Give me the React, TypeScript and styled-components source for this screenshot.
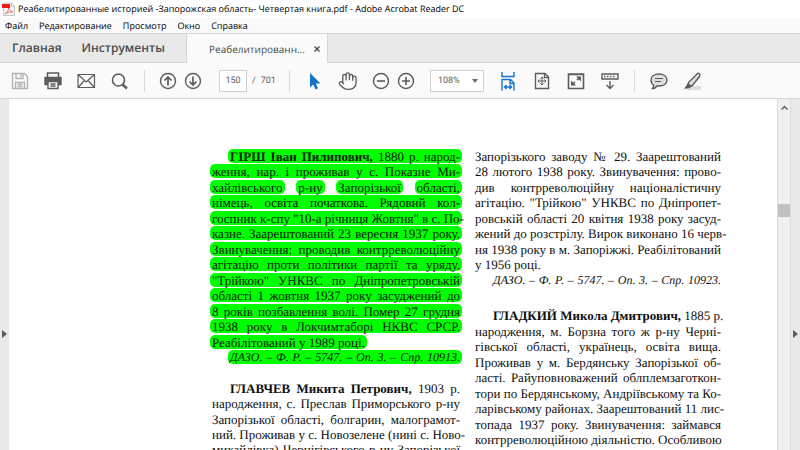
import React from 'react';
import styled, { createGlobalStyle } from 'styled-components';

const Global = createGlobalStyle`
  * { box-sizing: border-box; }
  body { margin: 0; background: #fff; font-family: "Open Sans", sans-serif; color: #000; text-rendering: geometricPrecision; }
  button, input, select { font: inherit; color: inherit; text-rendering: inherit; }
`;

const Window = styled.div`
  display: flex;
  flex-direction: column;
  height: 100vh;
  overflow: hidden;
`;

const TitleBar = styled.header`
  display: flex;
  align-items: center;
  gap: 3px;
  height: 18px;
  flex: none;
  padding-left: 1px;
  font: 9px/18px "Open Sans", sans-serif;
  white-space: nowrap;
`;

const MenuBar = styled.nav`
  display: flex;
  gap: 11px;
  height: 15px;
  flex: none;
  padding-left: 5px;
  background: #fafafa;
`;

const MenuItem = styled.button`
  border: 0;
  padding: 0;
  background: none;
  font: 9px/15px "Open Sans", sans-serif;
`;

const TabBar = styled.div`
  display: flex;
  flex: none;
  height: 30px;
  background: #e9e9e9;
  border-top: 1px solid #d6d6d6;
  border-bottom: 1px solid #d6d6d6;
`;

const MainTabs = styled.div`
  display: flex;
  gap: 20px;
  width: 187px;
  padding-left: 12px;
  border-right: 1px solid #d6d6d6;
`;

const MainTab = styled.button`
  border: 0;
  padding: 0;
  background: none;
  color: #4b4b4b;
  font: 600 12px/28px "Open Sans", sans-serif;
`;

const FileTab = styled.div`
  display: flex;
  align-items: center;
  justify-content: space-between;
  width: 141px;
  margin-bottom: -1px;
  padding: 0 7px 0 22px;
  background: #fafafa;
  border-right: 1px solid #d6d6d6;
`;

const FileName = styled.button`
  border: 0;
  padding: 0;
  background: none;
  color: #4b4b4b;
  font: 10px/28px "Open Sans", sans-serif;
`;

const CloseButton = styled.button`
  display: flex;
  border: 0;
  padding: 0;
  background: none;
`;

const Toolbar = styled.div`
  display: flex;
  align-items: center;
  flex: none;
  height: 36px;
  padding-left: 8px;
  background: #fafafa;
  border-bottom: 1px solid #d6d6d6;
  color: #5c5c5c;
`;

const Group = styled.div<{ $gap: number; $before?: number }>`
  display: flex;
  align-items: center;
  gap: ${p => p.$gap}px;
  margin-left: ${p => p.$before ?? 0}px;
`;

const Separator = styled.span<{ $before: number; $after: number }>`
  width: 1px;
  height: 22px;
  margin: 0 ${p => p.$after}px 0 ${p => p.$before}px;
  background: #d9d9d9;
`;

const ToolButton = styled.button<{ $tone?: string }>`
  display: flex;
  border: 0;
  padding: 0;
  background: none;
  color: ${p => p.$tone ?? '#5c5c5c'};
`;

const PageField = styled.div`
  display: flex;
  align-items: center;
  gap: 5px;
  margin-left: 14px;
  font: 9px/14px Roboto, sans-serif;
`;

const PageInput = styled.input`
  width: 28px;
  height: 22px;
  padding: 0;
  border: 1px solid #d0d0d0;
  background: #fff;
  text-align: center;
`;

const ZoomBox = styled.div`
  display: flex;
  align-items: center;
  position: relative;
  margin: 0 12px;
  font: 9px/14px Roboto, sans-serif;
`;

const ZoomSelect = styled.select`
  appearance: none;
  width: 54px;
  height: 22px;
  padding: 0 0 0 7px;
  border: 1px solid #d0d0d0;
  border-radius: 0;
  background: #fff;
`;

const Caret = styled.span`
  position: absolute;
  right: 6px;
  border: 3px solid transparent;
  border-top: 4px solid #6a6a6a;
  border-bottom: 0;
  pointer-events: none;
`;

const Body = styled.div`
  display: flex;
  flex: 1;
  min-height: 0;
`;

const SideHandle = styled.button`
  display: flex;
  align-items: center;
  justify-content: center;
  flex: none;
  width: 9px;
  padding: 118px 0 0;
  border: 0;
  background: #e9e9e9;
`;

const Sheet = styled.main`
  display: flex;
  align-items: flex-start;
  flex: 1;
  min-width: 0;
  gap: 15px;
  padding: 50px 0 0 203px;
  overflow: hidden;
  background: #fff;
`;

const Column = styled.article<{ $width: number }>`
  flex: none;
  width: ${p => p.$width}px;
  color: #101010;
  font: 13px/1.19 "Liberation Serif", serif;
  white-space: nowrap;
`;

const Entry = styled.section<{ $after: number }>`
  margin-bottom: ${p => p.$after}px;
`;

const Line = styled.div<{ $indent?: boolean; $natural?: boolean }>`
  display: flex;
  justify-content: space-between;
  height: 1.19em;
  padding-left: ${p => (p.$indent ? 18 : 0)}px;
  text-align-last: ${p => (p.$natural ? 'left' : 'justify')};
`;

const Run = styled.span<{ $fill: boolean; $italic?: boolean }>`
  flex: ${p => (p.$fill ? '1' : 'none')};
  min-width: 0;
  ${p => p.$italic && 'font: italic 12px/15px "Liberation Serif", serif;'}
`;

const Highlight = styled(Run).attrs({ as: 'mark' })`
  height: 14px;
  margin: 0 -2px;
  padding: 0 2px;
  border-radius: 5px;
  background: #00ff00;
  color: #052005;
`;

const ScrollTrack = styled.div`
  display: flex;
  flex-direction: column;
  align-items: center;
  flex: none;
  width: 14px;
  padding-top: 6px;
  background: #f0f0f0;
  border-left: 1px solid #dcdcdc;
  border-right: 1px solid #dcdcdc;
`;

const ScrollThumb = styled.div`
  width: 12px;
  height: 13px;
  margin-top: 94px;
  background: #c1c1c1;
`;

type Row = { t?: string; b?: string; words?: string[]; natural?: boolean; indent?: boolean; italic?: boolean };

const hirsh: Row[] = [
  { b: 'ГІРШ Іван Пилипович,', t: ' 1880 р. народ-', indent: true },
  { t: 'ження, нар. і проживав у с. Показне Ми-' },
  { words: ['хайлівського', 'р-ну', 'Запорізької', 'області,'] },
  { t: 'німець, освіта початкова. Рядовий кол-' },
  { t: 'госпник к-спу "10-а річниця Жовтня" в с. По-' },
  { t: 'казне. Заарештований 23 вересня 1937 року.' },
  { t: 'Звинувачення: проводив контрреволюційну' },
  { t: 'агітацію проти політики партії та уряду.' },
  { t: '"Трійкою" УНКВС по Дніпропетровській' },
  { t: 'області 1 жовтня 1937 року засуджений до' },
  { t: '8 років позбавлення волі. Помер 27 грудня' },
  { t: '1938 року в Локчимтаборі НКВС СРСР.' },
  { t: 'Реабілітований у 1989 році.', natural: true },
  { t: 'ДАЗО. – Ф. Р. – 5747. – Оп. 3. – Спр. 10913.', indent: true, italic: true },
];

const hlavchev: Row[] = [
  { b: 'ГЛАВЧЕВ Микита Петрович,', t: ' 1903 р.', indent: true },
  { t: 'народження, с. Преслав Приморського р-ну' },
  { t: 'Запорізької області, болгарин, малограмот-' },
  { t: 'ний. Проживав у с. Новозелене (нині с. Ново-' },
  { t: 'михайлівка) Чернігівського р-ну Запорізької' },
];

const zavod: Row[] = [
  { t: 'Запорізького заводу № 29. Заарештований' },
  { t: '28 лютого 1938 року. Звинувачення: прово-' },
  { t: 'див контрреволюційну націоналістичну' },
  { t: 'агітацію. "Трійкою" УНКВС по Дніпропет-' },
  { t: 'ровській області 20 квітня 1938 року засуд-' },
  { t: 'жений до розстрілу. Вирок виконано 16 черв-' },
  { t: 'ня 1938 року в м. Запоріжжі. Реабілітований' },
  { t: 'у 1956 році.', natural: true },
  { t: 'ДАЗО. – Ф. Р. – 5747. – Оп. 3. – Спр. 10923.', indent: true, italic: true },
];

const hladkyi: Row[] = [
  { b: 'ГЛАДКИЙ Микола Дмитрович,', t: ' 1885 р.', indent: true },
  { t: 'народження, м. Борзна того ж р-ну Черні-' },
  { t: 'гівської області, українець, освіта вища.' },
  { t: 'Проживав у м. Бердянську Запорізької об-' },
  { t: 'ласті. Райуповноважений облплемзаготкон-' },
  { t: 'тори по Бердянському, Андріївському та Ко-' },
  { t: 'ларівському районах. Заарештований 11 лис-' },
  { t: 'топада 1937 року. Звинувачення: займався' },
  { t: 'контрреволюційною діяльністю. Особливою' },
  { t: '"трійкою" УНКВС по Дніпропетровській об-' },
];

function Lines({ rows, marked, after }: { rows: Row[]; marked?: boolean; after: number }) {
  const Piece = marked ? Highlight : Run;
  return (
    <Entry $after={after}>
      {rows.map((r, i) => (
        <Line key={i} $indent={r.indent} $natural={r.natural}>
          {r.words
            ? r.words.map(w => <Piece key={w} $fill={false}>{w}</Piece>)
            : <Piece $fill={!r.natural} $italic={r.italic}>{r.b && <b>{r.b}</b>}{r.t}</Piece>}
        </Line>
      ))}
    </Entry>
  );
}

function Glyph({ children }: { children: React.ReactNode }) {
  return (
    <svg width="24" height="24" viewBox="0 0 24 24" fill="none" stroke="currentColor" strokeWidth="1.4" aria-hidden="true">
      {children}
    </svg>
  );
}

function Tool({ label, tone, children }: { label: string; tone?: string; children: React.ReactNode }) {
  return <ToolButton type="button" aria-label={label} title={label} $tone={tone}><Glyph>{children}</Glyph></ToolButton>;
}

export default function App() {
  return (
    <Window>
      <Global />
      <TitleBar>
        <svg width="14" height="14" viewBox="0 0 14 14" aria-hidden="true">
          <path d="M2.5 1h8l3 3v9.5h-11z" fill="#f3f3f3" stroke="#c4c4c4" />
          <path d="M10.5 1v3h3" fill="#fff" stroke="#b9b9b9" />
          <rect x="1" y="2" width="8" height="4" fill="#f01818" />
          <path d="M4 12c2.5-2 4-4 3.5-6 1 2 2 4 4.5 4-3-.5-5.5.5-8 2z" fill="none" stroke="#e0605c" strokeWidth=".8" />
        </svg>
        <span>Реабелитированные историей -Запорожская область- Четвертая книга.pdf - Adobe Acrobat Reader DC</span>
      </TitleBar>
      <MenuBar>
        {['Файл', 'Редактирование', 'Просмотр', 'Окно', 'Справка'].map(m => <MenuItem key={m} type="button">{m}</MenuItem>)}
      </MenuBar>
      <TabBar>
        <MainTabs>
          <MainTab type="button">Главная</MainTab>
          <MainTab type="button">Инструменты</MainTab>
        </MainTabs>
        <FileTab>
          <FileName type="button">Реабелитированн...</FileName>
          <CloseButton type="button" aria-label="Закрыть">
            <svg width="6" height="6" viewBox="0 0 6 6" stroke="#4b4b4b" strokeWidth="1.4" aria-hidden="true"><path d="M.5.5l5 5M5.5.5l-5 5" /></svg>
          </CloseButton>
        </FileTab>
      </TabBar>
      <Toolbar>
        <Group $gap={9}>
          <Tool label="Сохранить" tone="#b4b4b4">
            <path d="M4.5 4.5h12l3 3v12h-15zM8 4.5v5h7v-5M13 5v3M7.5 19.5v-6h9v6M9.5 15.5h5M9.5 17.5h5" />
          </Tool>
          <Tool label="Печать">
            <path d="M6.5 8v-4h11v4" strokeWidth="1.6" />
            <path d="M4 8.5h16v7h-3v-3H7v3H4z" fill="currentColor" strokeLinejoin="round" />
            <path d="M7 12.5h10v7H7zM9.5 15h5M9.5 17h5" fill="#fafafa" />
          </Tool>
          <Tool label="Отправить по почте">
            <path d="M4 5.5h16.5v13H4zM4 5.5l8.2 7.5 8.3-7.5M4 18.5l6-6.5M20.5 18.5l-6-6.5" strokeWidth="1.2" />
          </Tool>
          <Tool label="Найти">
            <circle cx="11.5" cy="11" r="6" strokeWidth="1.6" /><path d="M15.5 15.5l4.5 4" strokeWidth="2.4" />
          </Tool>
        </Group>
        <Separator $before={13} $after={11} />
        <Group $gap={1}>
          <Tool label="Предыдущая страница"><circle cx="12" cy="12" r="7.5" /><path d="M12 16.5v-8M8.5 11.5L12 8l3.5 3.5" strokeWidth="1.7" /></Tool>
          <Tool label="Следующая страница"><circle cx="12" cy="12" r="7.5" /><path d="M12 7.5v8M8.5 12.5L12 16l3.5-3.5" strokeWidth="1.7" /></Tool>
        </Group>
        <PageField>
          <PageInput aria-label="Номер страницы" defaultValue="150" />
          <span>/</span>
          <span>701</span>
        </PageField>
        <Separator $before={13} $after={12} />
        <Group $gap={10}>
          <Tool label="Выделение" tone="#1473c8"><path d="M8 4v14.5l3.2-3 2.3 5 2.5-1.2-2.3-4.8h4.8z" fill="currentColor" stroke="none" /></Tool>
          <Tool label="Рука">
            <g transform="translate(1.8 2.2) scale(.83)" strokeLinecap="round" strokeLinejoin="round" strokeWidth="1.6">
              <path d="M18 11V6a2 2 0 0 0-4 0M14 10V4a2 2 0 0 0-4 0v2M10 10.5V6a2 2 0 0 0-4 0v8" />
              <path d="M18 8a2 2 0 1 1 4 0v6a8 8 0 0 1-8 8h-2c-2.8 0-4.5-.86-5.99-2.34l-3.6-3.6a2 2 0 0 1 2.83-2.82L7 15" />
            </g>
          </Tool>
        </Group>
        <Group $gap={1} $before={9}>
          <Tool label="Уменьшить"><circle cx="12" cy="12" r="7.5" /><path d="M8 12h8" strokeWidth="1.6" /></Tool>
          <Tool label="Увеличить"><circle cx="12" cy="12" r="7.5" /><path d="M8 12h8M12 8v8" strokeWidth="1.6" /></Tool>
        </Group>
        <ZoomBox>
          <ZoomSelect aria-label="Масштаб" defaultValue="108%"><option>108%</option></ZoomSelect>
          <Caret />
        </ZoomBox>
        <Group $gap={10}>
          <Tool label="По ширине" tone="#1473c8">
            <path d="M6 3v4.5h12V3M6 21.5v-11h8.5l3.5 3.5v7.5M14 11v3.5h4M8.5 18h7M10.5 16l-2 2 2 2M13.5 16l2 2-2 2" />
          </Tool>
          <Tool label="По размеру страницы">
            <path d="M5.5 4.5h9.5l3.5 3.5v11.5h-13zM14.5 5v3.5h4" />
            <path d="M12 8v8M8 12h8M10.5 9.5L12 8l1.5 1.5M10.5 14.5L12 16l1.5-1.5M9.5 10.5L8 12l1.5 1.5M14.5 10.5L16 12l-1.5 1.5" strokeWidth="1" />
          </Tool>
          <Tool label="Полный экран">
            <path d="M4.5 5h15v14.5h-15zM4.5 5.5h15M13 11l3-3M11 13l-3 3" strokeWidth="1.6" />
            <path d="M12 7.500h5v5zM7 11.5v5h5z" fill="currentColor" stroke="none" />
          </Tool>
          <Tool label="Панель чтения">
            <path d="M4 5h16v5H4zM12 12v7.5M8.5 16l3.5 3.5 3.5-3.5" /><path d="M6 7.5h12" strokeDasharray="1.5 1.5" />
          </Tool>
        </Group>
        <Separator $before={12} $after={12} />
        <Group $gap={9}>
          <Tool label="Комментарий">
            <path d="M12 5c4.5 0 8 2.3 8 6s-3.5 6-8 6h-2c-1 1.5-2.5 2.5-4.5 2.5 1-1 1.3-2 1.2-3.3C5 15 4 13.3 4 11c0-3.7 3.5-6 8-6z" fill="#dedede" /><path d="M8 9.5h8M8 12.5h6" strokeWidth="1.2" />
          </Tool>
          <Tool label="Выделить текст">
            <path d="M10 17h11v4H6z" fill="#dedede" stroke="none" />
            <path d="M8.5 13.5L17 5c1.5-1.5 4 0 2.5 2.5L12 17H8z" fill="#dedede" />
            <path d="M8 14l4 3-2 2-6 1z" fill="currentColor" stroke="none" />
          </Tool>
        </Group>
      </Toolbar>
      <Body>
        <SideHandle type="button" aria-label="Открыть панель слева">
          <svg width="5" height="8" viewBox="0 0 5 8" aria-hidden="true"><path d="M0 0l5 4-5 4z" fill="#5c5c5c" /></svg>
        </SideHandle>
        <Sheet>
          <Column $width={248}>
            <Lines rows={hirsh} marked after={15} />
            <Lines rows={hlavchev} after={0} />
          </Column>
          <Column $width={246}>
            <Lines rows={zavod} after={20} />
            <Lines rows={hladkyi} after={0} />
          </Column>
        </Sheet>
        <ScrollTrack>
          <svg width="7" height="5" viewBox="0 0 7 5" fill="none" stroke="#606060" strokeWidth="1.5" aria-hidden="true"><path d="M.5 4.5l3-3 3 3" /></svg>
          <ScrollThumb />
        </ScrollTrack>
        <SideHandle type="button" aria-label="Открыть панель справа">
          <svg width="5" height="8" viewBox="0 0 5 8" aria-hidden="true"><path d="M0 0l5 4-5 4z" fill="#5c5c5c" /></svg>
        </SideHandle>
      </Body>
    </Window>
  );
}
